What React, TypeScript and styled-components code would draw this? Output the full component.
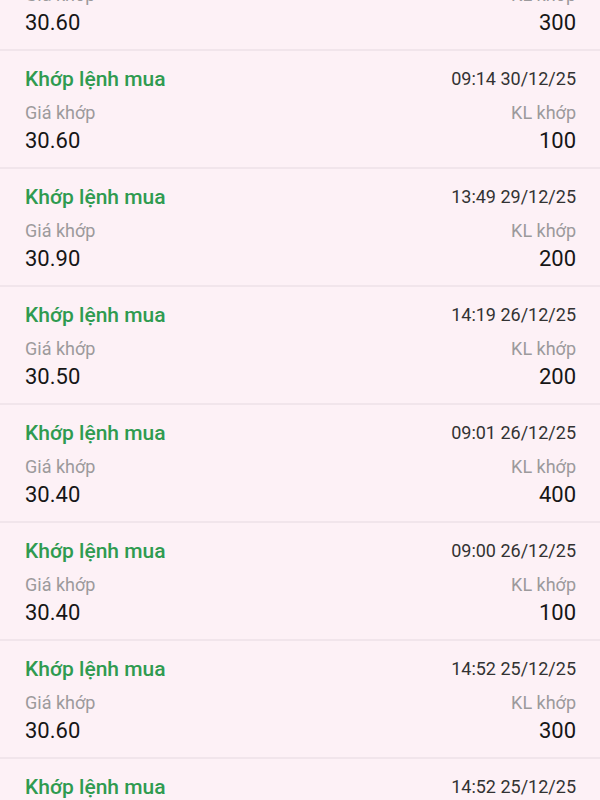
import React from "react";
import styled, { createGlobalStyle } from "styled-components";

interface Fill {
    time: string;
    price: string;
    qty: string;
}

const fills: Fill[] = [
    { time: "14:52 25/12/25", price: "30.60", qty: "300" },
    { time: "09:14 30/12/25", price: "30.60", qty: "100" },
    { time: "13:49 29/12/25", price: "30.90", qty: "200" },
    { time: "14:19 26/12/25", price: "30.50", qty: "200" },
    { time: "09:01 26/12/25", price: "30.40", qty: "400" },
    { time: "09:00 26/12/25", price: "30.40", qty: "100" },
    { time: "14:52 25/12/25", price: "30.60", qty: "300" },
    { time: "14:52 25/12/25", price: "30.60", qty: "300" },
];

const GlobalStyle = createGlobalStyle`
    html, body {
        margin: 0;
        padding: 0;
        background: #fdf1f6;
        font-family: Roboto, "Noto Sans", "Liberation Sans", sans-serif;
        overflow: hidden;
    }
`;

const Screen = styled.div`
    width: 600px;
    height: 800px;
    overflow: hidden;
    background: #fdf1f6;
`;

// list is scrolled: the first row is partly above the top edge
const List = styled.div`
    display: flex;
    flex-direction: column;
    margin-top: -67px;
`;

const Row = styled.div`
    display: grid;
    grid-template-columns: 1fr auto;
    grid-template-rows: 28px 34px 28px;
    height: 118px;
    box-sizing: border-box;
    padding: 14px 24px 0 25px;
    border-bottom: 2px solid #f1e5eb;
`;

const Title = styled.div`
    font-size: 21px;
    line-height: 28px;
    font-weight: 500;
    color: #2f9b50;
`;

const Time = styled.div`
    font-size: 18px;
    line-height: 28px;
    color: #333333;
    text-align: right;
`;

const Label = styled.div<{ $right?: boolean }>`
    align-self: end;
    font-size: 18px;
    line-height: 28px;
    color: #9c9a9c;
    text-align: ${(p) => (p.$right ? "right" : "left")};
`;

const Value = styled.div<{ $right?: boolean }>`
    font-size: 22px;
    line-height: 28px;
    font-weight: 400;
    color: #161616;
    text-align: ${(p) => (p.$right ? "right" : "left")};
`;

export default function App() {
    return (
        <Screen>
            <GlobalStyle />
            <List>
                {fills.map((f, i) => (
                    <Row key={i}>
                        <Title>Khớp lệnh mua</Title>
                        <Time>{f.time}</Time>
                        <Label>Giá khớp</Label>
                        <Label $right>KL khớp</Label>
                        <Value>{f.price}</Value>
                        <Value $right>{f.qty}</Value>
                    </Row>
                ))}
            </List>
        </Screen>
    );
}
